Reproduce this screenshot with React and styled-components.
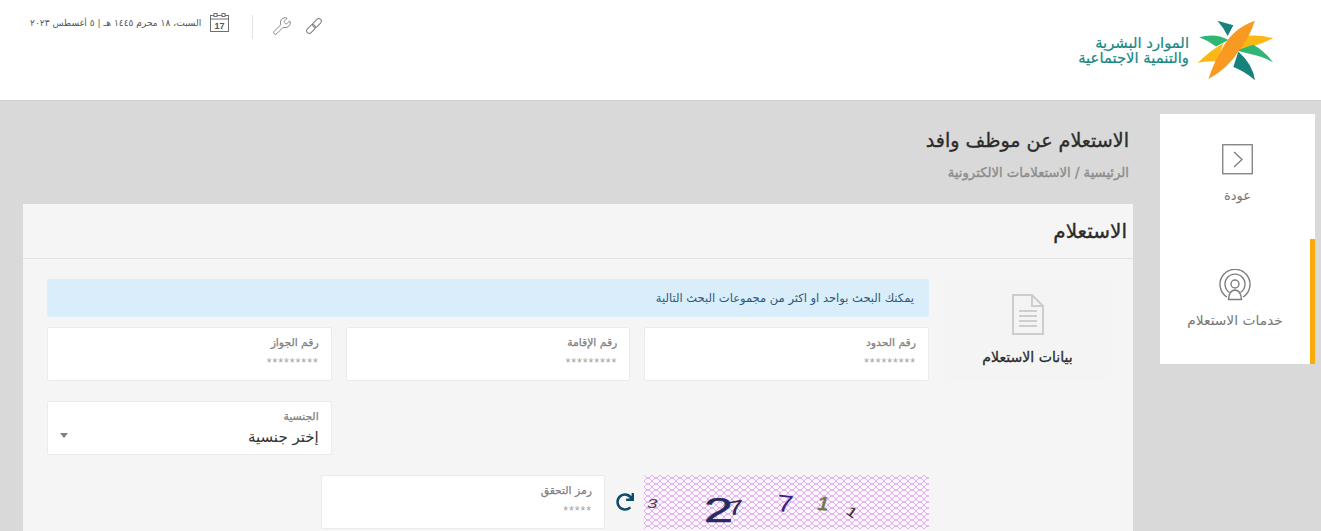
import React from "react";
import styled, { createGlobalStyle } from "styled-components";
import { Wrench } from "lucide-react";
import { FaRedo } from "react-icons/fa";

const Global = createGlobalStyle`
  html, body { margin: 0; padding: 0; height: 531px; overflow: hidden; background: #d9d9d9; }
  body { font-family: "DejaVu Sans", "Noto Sans", sans-serif; }
  * { box-sizing: border-box; }
`;

const Page = styled.div`
  direction: rtl;
  height: 531px;
  overflow: hidden;
  background: #d9d9d9;
`;
const Header = styled.header`
  height: 101px;
  background: #fff;
  border-bottom: 1px solid #cfcfcf;
  display: flex;
  justify-content: space-between;
  padding: 12px 46px 0 30px;
`;
const Logo = styled.div`
  display: flex;
  align-items: center;
  gap: 6px;
  height: 64px;
  margin-top: 7px;
`;
const LogoText = styled.div`
  color: #17877f;
  font-size: 14.8px;
  line-height: 14.5px;
  white-space: nowrap;
  text-align: right;
  -webkit-text-stroke: 0.2px #17877f;
  margin-top: -1px;
`;
const Tools = styled.div`
  display: flex;
  align-items: flex-start;
  direction: ltr;
`;
const ToolIcon = styled.span`
  display: flex;
  width: 32px;
  height: 28px;
  align-items: center;
  justify-content: center;
  color: #7d7d7d;
`;
const Divider = styled.span`
  width: 1px;
  height: 24px;
  background: #e2e2e2;
  margin: 3px 13px 0 22px;
`;
const DateBox = styled.div`
  display: flex;
  flex-direction: row-reverse;
  align-items: center;
  gap: 9px;
  font-size: 9.1px;
  color: #555;
  height: 21px;
`;
const Body = styled.div`
  display: flex;
  align-items: flex-start;
  padding: 13px 6px 0 0;
`;
const Side = styled.aside`
  width: 155px;
  height: 250px;
  background: #fff;
  flex: none;
`;
const SideItem = styled.div`
  height: 125px;
  display: flex;
  flex-direction: column;
  align-items: center;
  padding-top: 30px;
  color: #777;
  font-size: ${(p) => (p.$active ? 13.8 : 13)}px;
  border-right: ${(p) => (p.$active ? "5px solid #f9ab0c" : "0")};
  gap: ${(p) => (p.$active ? 11 : 13)}px;
`;
const Main = styled.main`
  flex: none;
  width: 1110px;
  margin-right: 27px;
`;
const Title = styled.h1`
  margin: 15px 4px 0 0;
  font-size: 19.1px;
  line-height: 24px;
  font-weight: 400;
  -webkit-text-stroke: 0.35px #2b2b2b;
  color: #2b2b2b;
`;
const Crumbs = styled.div`
  margin: 12px 4px 0 0;
  font-size: 13.2px;
  line-height: 16px;
  font-weight: 400;
  -webkit-text-stroke: 0.35px #8c8c8c;
  color: #8c8c8c;
`;
const Card = styled.section`
  margin-top: 23px;
  background: #f5f5f5;
  height: 400px;
`;
const CardHead = styled.div`
  height: 55px;
  border-bottom: 1px solid #e2e2e2;
  display: flex;
  align-items: center;
  padding-right: 6px;
  font-size: 20px;
  -webkit-text-stroke: 0.35px #2b2b2b;
  color: #2b2b2b;
`;
const CardBody = styled.div`
  display: flex;
  align-items: flex-start;
  padding: 20px 23px 0 0;
`;
const InfoBlock = styled.div`
  width: 165px;
  height: 102px;
  background: #f4f4f4;
  flex: none;
  display: flex;
  flex-direction: column;
  align-items: center;
  padding-top: 15px;
  gap: 14px;
  font-size: 14.1px;
  -webkit-text-stroke: 0.3px #2b2b2b;
  color: #2b2b2b;
`;
const Form = styled.div`
  width: 882px;
  margin-right: 16px;
`;
const Alert = styled.div`
  height: 38px;
  background: #d9edfb;
  border-radius: 3px;
  display: flex;
  align-items: center;
  padding-right: 15px;
  color: #2c5a7c;
  font-size: 11.5px;
`;
const Row = styled.div`
  display: grid;
  grid-template-columns: repeat(3, 1fr);
  gap: 14px;
  margin-top: ${(p) => p.$top}px;
`;
const Field = styled.div`
  height: 54px;
  background: #fff;
  border: 1px solid #ebebeb;
  border-radius: 2px;
  padding: 8px 12px 0;
  width: ${(p) => p.$w || "auto"};
  grid-column: ${(p) => p.$col || "auto"};
  position: relative;
  flex: none;
`;
const Label = styled.div`
  font-size: 10.8px;
  line-height: 14px;
  font-weight: 400;
  -webkit-text-stroke: 0.25px #808080;
  color: #808080;
`;
const Mask = styled.div`
  font-family: "Liberation Sans", sans-serif;
  font-size: 12.5px;
  line-height: 14px;
  margin-top: 6px;
  color: #a3a3a3;
  letter-spacing: 0.9px;
`;
const SelectValue = styled.div`
  font-size: 15px;
  line-height: 22px;
  margin-top: 2px;
  color: #333;
`;
const Caret = styled.span`
  position: absolute;
  left: 12px;
  top: 31px;
  width: 0;
  height: 0;
  border-left: 4px solid transparent;
  border-right: 4px solid transparent;
  border-top: 5px solid #808080;
`;
const CaptchaRow = styled.div`
  display: flex;
  align-items: center;
  margin-top: 20px;
`;
const Refresh = styled.span`
  width: 39px;
  display: flex;
  justify-content: center;
  color: #0d4a6b;
`;

const Captcha = () => (
  <svg width="285" height="54" viewBox="0 0 285 54" style={{ display: "block", flex: "none", direction: "ltr" }}>
    <defs>
      <pattern id="mesh" width="8" height="6" patternUnits="userSpaceOnUse">
        <rect width="8" height="6" fill="#fbf7fc" />
        <path d="M0 0 Q4 6 8 0 M0 6 Q4 0 8 6" stroke="#d9a5ec" strokeWidth="0.9" fill="none" />
      </pattern>
    </defs>
    <rect width="285" height="54" fill="url(#mesh)" />
    <g fontFamily="Liberation Sans, sans-serif">
      <text transform="translate(3 33) scale(1.25 0.85)" fontSize="15" fontStyle="italic" fill="#4d3a58">3</text>
      <text transform="translate(60 47) scale(1.45 1)" fontSize="36" fill="#262a63" stroke="#262a63" strokeWidth="0.6">2</text>
      <text transform="translate(83 41) rotate(-10) scale(1.3 0.75)" fontSize="26" fill="#2a2a55">7</text>
      <text transform="translate(132 36) rotate(6) scale(1.25 1)" fontSize="24" fontWeight="300" fill="#3f1e86">7</text>
      <text transform="translate(173 35) rotate(4)" fontSize="20" fontWeight="700" fontStyle="italic" fill="#76774a">1</text>
      <text transform="translate(201 38) rotate(35) scale(1.1 0.8)" fontSize="17" fill="#3a2a24">1</text>
    </g>
  </svg>
);

const StarLogo = () => (
  <svg width="80" height="63" viewBox="405 30 240 190" style={{ flex: "none" }}>
    <path d="M472 32 L520 46 L503 78 Q490 52 472 32Z" fill="#17827c" />
    <path d="M417 82 Q465 68 505 90 L468 110 Q445 92 417 82Z" fill="#2fb574" />
    <path d="M640 85 Q590 72 548 80 L530 122 Q590 110 640 85Z" fill="#fbb713" />
    <path d="M412 160 Q450 122 490 100 L470 155 Q440 152 412 160Z" fill="#fbb713" />
    <path d="M640 158 Q612 122 580 105 L530 122 L568 132 Q610 140 640 158Z" fill="#2fb574" />
    <path d="M585 212 Q580 165 535 125 L520 172 Q555 185 585 212Z" fill="#17827c" />
    <path d="M585 32 Q520 55 490 110 Q460 160 445 208 Q505 175 535 125 Q570 80 585 32Z" fill="#f89a22" />
  </svg>
);

const ChainIcon = () => (
  <svg width="16" height="16" viewBox="0 0 16 16" fill="none" stroke="#7d7d7d" strokeWidth="1">
    <rect x="-5" y="-2.6" width="10" height="5.2" rx="2.6" transform="translate(5 11) rotate(-45)" />
    <rect x="-5" y="-2.6" width="10" height="5.2" rx="2.6" transform="translate(11 5) rotate(-45)" />
  </svg>
);

const CalendarIcon = () => (
  <svg width="20" height="20" viewBox="0 0 20 20" fill="none" stroke="#6f6f6f" style={{ flex: "none" }}>
    <rect x="0.5" y="2.5" width="18" height="16" />
    <line x1="0.5" y1="6" x2="18.5" y2="6" />
    <rect x="4" y="0.5" width="3" height="3" fill="#fff" />
    <rect x="12" y="0.5" width="3" height="3" fill="#fff" />
    <text x="9.5" y="15.5" fontSize="9" fontFamily="Liberation Sans, sans-serif" fill="#555" stroke="none" textAnchor="middle" fontWeight="700">17</text>
  </svg>
);

const BackIcon = () => (
  <svg width="31" height="31" viewBox="0 0 31 31" fill="none" stroke="#7d7d7d" style={{ display: "block" }}>
    <rect x="0.75" y="0.75" width="29.5" height="29" strokeWidth="1.3" />
    <path d="M12 8 L20 15.5 L12 23" strokeWidth="1.3" />
  </svg>
);

const ServicesIcon = () => (
  <svg width="32" height="32" viewBox="0 0 32 32" fill="none" stroke="#7d7d7d" strokeWidth="1.4" style={{ display: "block" }}>
    <path d="M8 28 A15 15 0 1 1 24 28" />
    <path d="M10.5 23.5 A10 10 0 1 1 21.5 23.5" />
    <circle cx="16" cy="15" r="4" />
    <path d="M9.5 30.5 Q10 21.5 16 21 Q22 21.5 22.5 30.5 Z" />
  </svg>
);

const DocIcon = () => (
  <svg width="32" height="41" viewBox="0 0 32 41" fill="none" stroke="#cdcdcd" strokeWidth="2" style={{ display: "block" }}>
    <path d="M1 1 H20 L31 12 V40 H1 Z" />
    <path d="M20 1 V12 H31" />
    <path d="M7 17 H25 M7 22 H25 M7 27 H25 M7 32 H25" />
  </svg>
);

const fields = ["رقم الحدود", "رقم الإقامة", "رقم الجواز"];

export default function App() {
  return (
    <Page>
      <Global />
      <Header>
        <Logo>
          <StarLogo />
          <LogoText>
            الموارد البشرية
            <br />
            والتنمية الاجتماعية
          </LogoText>
        </Logo>
        <Tools>
          <DateBox>
            <CalendarIcon />
            <span dir="rtl">السبت، ١٨ محرم ١٤٤٥ هـ | ٥ أغسطس ٢٠٢٣</span>
          </DateBox>
          <Divider />
          <ToolIcon><Wrench size={20} strokeWidth={1.1} /></ToolIcon>
          <ToolIcon><ChainIcon /></ToolIcon>
        </Tools>
      </Header>
      <Body>
        <Side>
          <SideItem>
            <BackIcon />
            <span>عودة</span>
          </SideItem>
          <SideItem $active>
            <ServicesIcon />
            <span>خدمات الاستعلام</span>
          </SideItem>
        </Side>
        <Main>
          <Title>الاستعلام عن موظف وافد</Title>
          <Crumbs>الرئيسية / الاستعلامات الالكترونية</Crumbs>
          <Card>
            <CardHead>الاستعلام</CardHead>
            <CardBody>
              <InfoBlock>
                <DocIcon />
                <span>بيانات الاستعلام</span>
              </InfoBlock>
              <Form>
                <Alert>يمكنك البحث بواحد او اكثر من مجموعات البحث التالية</Alert>
                <Row $top={10}>
                  {fields.map((f) => (
                    <Field key={f}>
                      <Label>{f}</Label>
                      <Mask>*********</Mask>
                    </Field>
                  ))}
                </Row>
                <Row $top={20}>
                  <Field $col="3">
                    <Label>الجنسية</Label>
                    <SelectValue>إختر جنسية</SelectValue>
                    <Caret />
                  </Field>
                </Row>
                <CaptchaRow>
                  <Captcha />
                  <Refresh><FaRedo size={18} /></Refresh>
                  <Field $w="284px">
                    <Label>رمز التحقق</Label>
                    <Mask>*****</Mask>
                  </Field>
                </CaptchaRow>
              </Form>
            </CardBody>
          </Card>
        </Main>
      </Body>
    </Page>
  );
}
